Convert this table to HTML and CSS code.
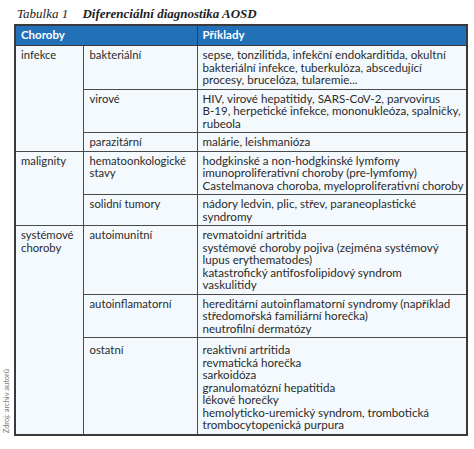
FILE: index.html
```html
<!DOCTYPE html>
<html lang="cs">
<head>
    <meta charset="UTF-8">
    <meta name="viewport" content="width=device-width, initial-scale=1.0">
    <title>Tabulka 1</title>
    <link rel="stylesheet" href="styles.css">
</head>
<body>
    <div class="figure">
        <div class="caption">
            <span class="caption-num">Tabulka 1</span>
            <span class="caption-title">Diferenciální diagnostika AOSD</span>
        </div>
        <div class="figure-body">
            <div class="source"><span>Zdroj: archiv autorů</span></div>
            <table class="dd-table">
                <colgroup>
                    <col class="c1">
                    <col class="c2">
                    <col class="c3">
                </colgroup>
                <thead>
                    <tr>
                        <th colspan="2">Choroby</th>
                        <th>Příklady</th>
                    </tr>
                </thead>
                <tbody>
                    <tr>
                        <td rowspan="3">infekce</td>
                        <td>bakteriální</td>
                        <td class="ex">sepse, tonzilitida, infekční endokarditida, okultní<br>bakteriální infekce, tuberkulóza, abscedující<br>procesy, brucelóza, tularemie...</td>
                    </tr>
                    <tr>
                        <td>virové</td>
                        <td class="ex">HIV, virové hepatitidy, SARS-CoV-2, parvovirus<br>B-19, herpetické infekce, mononukleóza, spalničky,<br>rubeola</td>
                    </tr>
                    <tr>
                        <td>parazitární</td>
                        <td class="ex">malárie, leishmanióza</td>
                    </tr>
                    <tr>
                        <td rowspan="2">malignity</td>
                        <td>hematoonkologické stavy</td>
                        <td class="ex">hodgkinské a non-hodgkinské lymfomy<br>imunoproliferativní choroby (pre-lymfomy)<br>Castelmanova choroba, myeloproliferativní choroby</td>
                    </tr>
                    <tr>
                        <td>solidní tumory</td>
                        <td class="ex">nádory ledvin, plic, střev, paraneoplastické<br>syndromy</td>
                    </tr>
                    <tr>
                        <td rowspan="3">systémové choroby</td>
                        <td>autoimunitní</td>
                        <td class="ex">revmatoidní artritida<br>systémové choroby pojiva (zejména systémový<br>lupus erythematodes)<br>katastrofický antifosfolipidový syndrom<br>vaskulitidy</td>
                    </tr>
                    <tr>
                        <td>autoinflamatorní</td>
                        <td class="ex">hereditární autoinflamatorní syndromy (například<br>středomořská familiární horečka)<br>neutrofilní dermatózy</td>
                    </tr>
                    <tr class="tall">
                        <td>ostatní</td>
                        <td class="ex">reaktivní artritida<br>revmatická horečka<br>sarkoidóza<br>granulomatózní hepatitida<br>lékové horečky<br>hemolyticko-uremický syndrom, trombotická<br>trombocytopenická purpura</td>
                    </tr>
                </tbody>
            </table>
        </div>
    </div>
</body>
</html>
```

FILE: styles.css
```css
body {
    margin: 0;
    background: #ffffff;
    color: #2b2b2b;
    font-family: Lato, "Noto Sans", sans-serif;
}
.figure {
    padding: 5px 6px 0 0;
}
.caption {
    font-family: "Liberation Serif", serif;
    font-style: italic;
    font-size: 13px;
    line-height: 18px;
    color: #222;
    padding-left: 17px;
    margin-bottom: 1px;
}
.caption-num {
    margin-right: 11px;
}
.caption-title {
    font-weight: bold;
}
.figure-body {
    display: flex;
    align-items: flex-end;
}
.source {
    width: 16px;
    display: flex;
    justify-content: center;
    padding-bottom: 2px;
}
.source span {
    writing-mode: vertical-rl;
    transform: rotate(180deg);
    font-size: 7.5px;
    color: #7a7a7a;
}
.dd-table {
    border-collapse: collapse;
    width: 452px;
    table-layout: fixed;
    font-size: 11.3px;
    line-height: 12.5px;
    border: 2px solid #3a3a3a;
}
.c1 { width: 69px; }
.c2 { width: 113px; }
.c3 { width: 270px; }
.dd-table th {
    background: #2170b8;
    color: #ffffff;
    text-align: left;
    font-weight: bold;
    font-size: 11.5px;
    height: 19px;
    padding: 0 5px;
    border: 1px solid #3a3a3a;
}
.dd-table td {
    background: #f3f9fd;
    vertical-align: top;
    padding: 3px 5px 2px 5px;
    border: 1px solid #4a4a4a;
}
.dd-table td.ex {
    font-size: 11.6px;
    white-space: nowrap;
    padding-right: 0;
}
.dd-table tr.tall td {
    padding-top: 6px;
    padding-bottom: 2px;
}
```
